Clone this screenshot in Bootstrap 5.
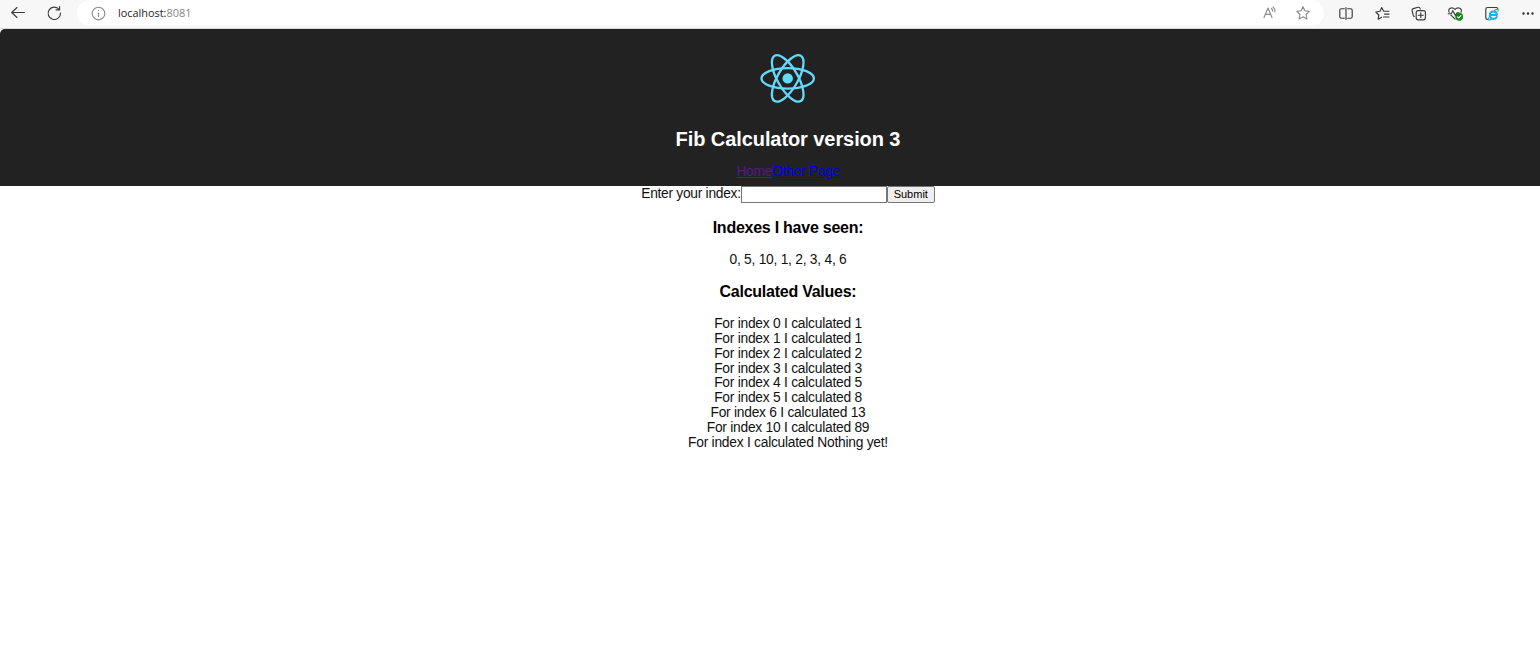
<!DOCTYPE html>
<html lang="en">
<head>
<meta charset="utf-8">
<title>Fib Calculator</title>
<link href="https://cdn.jsdelivr.net/npm/bootstrap@5.3.0/dist/css/bootstrap.min.css" rel="stylesheet">
<style>
body{font-family:"Liberation Sans",Arial,sans-serif;font-size:13.8px;letter-spacing:-.25px;line-height:14.87px;color:#111;background:#fff;height:648px}
.toolbar{height:29px;background:#f7f7f7;border-bottom:1px solid #dadbda;letter-spacing:0}
.toolbar svg{display:block;flex:none;fill:none;stroke:#3b3b3b;stroke-width:1.15;stroke-linecap:round;stroke-linejoin:round}
.toolbar .soft{stroke:#8b8b8b}
.nav-btns{width:77px;padding-left:10px;gap:20px;padding-bottom:2px}
.address{width:1247px;height:26px;border-radius:13px;background:#fff;padding:0 13px 0 14px}
.url{font-family:"Open Sans",sans-serif;font-size:10.9px;color:#222;margin-left:12px}
.url span{color:#858585}
.tools{gap:20.4px;padding-left:14px;padding-bottom:1px}
.viewport{background:#f7f7f7}
.app{width:1576px}
.app-header{height:157px;background:#222;border-top-left-radius:5px;padding-top:16px}
.logo{width:66px;height:66px}
.app-title{font-size:20px;letter-spacing:-.08px;line-height:22px;font-weight:700;color:#fff;margin:16.5px 0 15px}
.app-links{letter-spacing:-.3px}
.lnk-home{color:#551a8b}
.lnk-other{color:#00e}
.app-main{background:#fff;height:462px}
.index-label{padding-top:1px;letter-spacing:-.28px}
.index-input{width:146px;height:17px;border:1px solid #767676;background:#fff;padding:0 2px}
.submit-btn{width:48px;height:17px;border:1px solid #767676;border-radius:2px;background:#efefef;color:#000;font-size:11px;letter-spacing:0;line-height:13px;padding:0 0 1px;text-align:center}
h3.sub{font-size:16px;letter-spacing:-.25px;line-height:18px;font-weight:700;color:#000;margin:15.500px 0 0}
.seen{margin-top:16px}
.values{margin-top:16px}
</style>
</head>
<body class="overflow-hidden">
<nav class="toolbar d-flex align-items-start">
  <div class="nav-btns d-flex align-items-center h-100">
    <svg width="16" height="16" viewBox="0 0 16 16"><path d="M14.5 7.5H2M7 2.5l-5.3 5L7 12.500"/></svg>
    <svg width="16" height="16" viewBox="0 0 16 16"><path d="M13.200 4.500A6.200 6.200 0 1 0 14.500 8M13.600 1.500v3.300h-3.600"/></svg>
  </div>
  <div class="address d-flex align-items-center">
    <svg class="soft" width="15" height="15" viewBox="0 0 15 15"><circle cx="7.500" cy="7.500" r="6.300"/><path d="M7.500 6.800v3.700M7.500 4.500v.1"/></svg>
    <div class="url">localhost:<span>8081</span></div>
    <div class="ms-auto d-flex align-items-center" style="gap:17px">
      <svg class="soft" width="16" height="16" viewBox="0 0 16 16"><path d="M2 12.500L6 3l4 9.500M3.500 9.300h5M9.300 3.300q1.500 1.200 1.200 2.900M11.100 2q2.300 2 1.700 4.900"/></svg>
      <svg class="soft" width="16" height="16" viewBox="0 0 16 16"><path d="M8 1.800l1.900 4 4.300.6-3.100 3.100.8 4.400L8 11.800l-3.900 2.100.8-4.400-3.100-3.100 4.300-.6z"/></svg>
    </div>
  </div>
  <div class="tools d-flex align-items-center h-100">
    <svg width="16" height="16" viewBox="0 0 16 16"><path d="M6.300 2.700H3.300q-1.500 0-1.500 1.500v6.500q0 1.500 1.500 1.500h3M9.700 2.700h3q1.500 0 1.500 1.500v6.500q0 1.500-1.500 1.500h-3M8 1.500v12"/></svg>
    <svg width="16" height="16" viewBox="0 0 16 16"><path d="M9.700 5.200L7.700 1.600 6 5.300 1.800 6l3 3-.7 4.200 3.500-2M9.700 5.200H15M10.500 8.100H15M9.500 11H15"/></svg>
    <svg width="16" height="16" viewBox="0 0 16 16"><rect x="5.200" y="4.600" width="9.200" height="9.200" rx="2"/><path d="M9.800 6.700v5M7.300 9.200h5M3.300 10.500q-.9-.3-1.100-1.200L1.100 4.500q-.3-1.500 1.100-1.900l5-1.300q1.500-.3 1.900 1.100l.2.600"/></svg>
    <svg width="16" height="16" viewBox="0 0 16 16"><path d="M2.200 6.200C.3 2.500 5 .3 8 3.300c3-3 7.800-.8 6 2.900M4 9.200l4 4M1.300 7.700h3l1.500-3 2.600 4.700 1.700-2.700h1.500"/><circle cx="12.200" cy="10.800" r="3.700" fill="#108314" stroke="#108314" stroke-width=".6"/><path d="M10.500 10.800l1.200 1.200 2.200-2.300" stroke="#fff"/></svg>
    <svg width="16" height="16" viewBox="0 0 16 16"><path d="M4 13.400h-.5q-1.700 0-1.700-1.700V3.200q0-1.700 1.700-1.700h8.700q1.700 0 1.700 1.700"/><path d="M5.800 9h7.100C12.800 4.300 6 4.300 5.800 9.100c0 4.300 5.300 4.900 6.900 1.900" stroke="#1bb0ec" stroke-width="2"/><path d="M4.900 11.500c-1.700 3.900 1.700 2.200 3.100 1.300M10.500 4.300c1.700-1.200 4.200-1.600 3.500.9" stroke="#1bb0ec"/></svg>
    <svg width="16" height="16" viewBox="0 0 16 16"><g fill="#333" stroke="none"><circle cx="3.500" cy="7.500" r="1.200"/><circle cx="8" cy="7.500" r="1.200"/><circle cx="12.500" cy="7.500" r="1.200"/></g></svg>
  </div>
</nav>
<div class="viewport">
  <div class="app text-center">
    <header class="app-header">
      <svg class="logo d-block mx-auto" viewBox="0 0 66 66" fill="none" stroke="#61dafb" stroke-width="2.300"><circle cx="32.700" cy="33.400" r="5.200" fill="#61dafb" stroke="none"/><ellipse cx="32.700" cy="33.400" rx="26.200" ry="10.200"/><ellipse cx="32.700" cy="33.400" rx="26.200" ry="10.200" transform="rotate(60 32.700 33.400)"/><ellipse cx="32.700" cy="33.400" rx="26.200" ry="10.200" transform="rotate(120 32.700 33.400)"/></svg>
      <h1 class="app-title">Fib Calculator version 3</h1>
      <div class="app-links"><a class="lnk-home" href="#">Home</a><a class="lnk-other" href="#">Other Page</a></div>
    </header>
    <main class="app-main">
      <form class="d-flex justify-content-center">
        <label for="idx" class="index-label">Enter your index:</label><input id="idx" class="index-input" type="text"><button class="submit-btn" type="button">Submit</button>
      </form>
      <h3 class="sub">Indexes I have seen:</h3>
      <div class="seen">0, 5, 10, 1, 2, 3, 4, 6</div>
      <h3 class="sub">Calculated Values:</h3>
      <div class="values">
        <div>For index 0 I calculated 1</div>
        <div>For index 1 I calculated 1</div>
        <div>For index 2 I calculated 2</div>
        <div>For index 3 I calculated 3</div>
        <div>For index 4 I calculated 5</div>
        <div>For index 5 I calculated 8</div>
        <div>For index 6 I calculated 13</div>
        <div>For index 10 I calculated 89</div>
        <div>For index I calculated Nothing yet!</div>
      </div>
    </main>
  </div>
</div>
<script src="https://cdn.jsdelivr.net/npm/bootstrap@5.3.0/dist/js/bootstrap.bundle.min.js"></script>
</body>
</html>
